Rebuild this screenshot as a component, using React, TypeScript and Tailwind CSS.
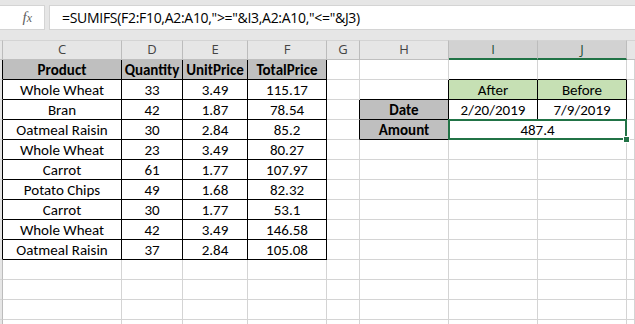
import React from "react";

const COLS = [3, 119, 61, 65, 79, 33, 89, 89, 89, 8];
const LETTERS = ["", "C", "D", "E", "F", "G", "H", "I", "J", ""];

const products: [string, string, string, string][] = [
  ["Whole Wheat", "33", "3.49", "115.17"],
  ["Bran", "42", "1.87", "78.54"],
  ["Oatmeal Raisin", "30", "2.84", "85.2"],
  ["Whole Wheat", "23", "3.49", "80.27"],
  ["Carrot", "61", "1.77", "107.97"],
  ["Potato Chips", "49", "1.68", "82.32"],
  ["Carrot", "30", "1.77", "53.1"],
  ["Whole Wheat", "42", "3.49", "146.58"],
  ["Oatmeal Raisin", "37", "2.84", "105.08"],
];

type Cell = { text?: string; bold?: boolean; bg?: string };

function getCell(r: number, c: number): Cell | null {
  if (r === 1 && c >= 1 && c <= 4) {
    return { text: ["Product", "Quantity", "UnitPrice", "TotalPrice"][c - 1], bold: true, bg: "bg-[#bfbfbf]" };
  }
  if (r >= 2 && r <= 10 && c >= 1 && c <= 4) {
    return { text: products[r - 2][c - 1] };
  }
  if (r === 2 && (c === 7 || c === 8)) {
    return { text: c === 7 ? "After" : "Before", bg: "bg-[#c6e0b4]" };
  }
  if (r === 3 && c === 6) return { text: "Date", bold: true, bg: "bg-[#bfbfbf]" };
  if (r === 3 && c === 7) return { text: "2/20/2019" };
  if (r === 3 && c === 8) return { text: "7/9/2019" };
  if (r === 4 && c === 6) return { text: "Amount", bold: true, bg: "bg-[#bfbfbf]" };
  if (r === 4 && (c === 7 || c === 8)) return { text: "487.4" };
  return null;
}

const inT = (r: number, c: number) => getCell(r, c) !== null;

function App() {
  const rows = Array.from({ length: 14 }, (_, i) => i + 1);
  return (
    <div
      className="w-[635px] h-[324px] overflow-hidden bg-white text-black"
      style={{ fontFamily: "Calibri, Carlito, Lato, 'Liberation Sans', sans-serif" }}
    >
      {/* formula bar */}
      <div className="h-[40px] bg-[#e6e6e6] flex items-start pt-[5px] gap-[4px]">
        <div className="w-[45px] h-[25px] bg-white border border-[#d4d4d4] border-l-0 flex items-center justify-end pr-[12px]">
          <span
            className="italic text-[#5f5f5f] text-[15px] leading-none"
            style={{ fontFamily: "'Liberation Serif', serif" }}
          >
            f<span className="text-[12px]">x</span>
          </span>
        </div>
        <div
          className="flex-1 h-[25px] bg-white border border-[#d4d4d4] border-r-0 flex items-center pl-[12px] text-[14px] tracking-[-0.3px]"
          style={{ fontFamily: "'Segoe UI', 'Open Sans', 'Noto Sans', sans-serif" }}
        >
          =SUMIFS(F2:F10,A2:A10,"&gt;="&amp;I3,A2:A10,"&lt;="&amp;J3)
        </div>
      </div>

      {/* column headers */}
      <div className="flex h-[20px]" style={{ fontFamily: "'Segoe UI', 'Open Sans', 'Noto Sans', sans-serif" }}>
        {COLS.map((w, c) => {
          const sel = c === 7 || c === 8;
          return (
            <div
              key={c}
              style={{ width: w }}
              className={
                "shrink-0 flex items-center justify-center text-[13px] border-t border-[#d4d4d4] " +
                (sel
                  ? "bg-[#d2d2d2] text-[#1e4e35] border-b-2 border-b-[#217346] "
                  : "bg-[#e6e6e6] text-[#444] border-b border-b-[#bfbfbf] ") +
                (c < 9 ? "border-r border-r-[#bcbcbc]" : "")
              }
            >
              {LETTERS[c]}
            </div>
          );
        })}
      </div>

      {/* grid */}
      {rows.map((r) => (
        <div key={r} className={"flex h-[20px] relative " + (r === 4 ? "z-10" : "")}>
          {COLS.map((w, c) => {
            if (r === 4 && c === 8) return null;
            const cell = getCell(r, c);
            let width = w;
            if (r === 4 && c === 7) width = COLS[7] + COLS[8];
            const nextC = r === 4 && c === 7 ? 9 : c + 1;
            const rightBlack = inT(r, c) || inT(r, nextC);
            const bottomBlack = inT(r, c) || inT(r + 1, c);
            const isRowHead = c === 0;
            const sel = r === 4 && c === 7;
            return (
              <div
                key={c}
                style={{ width }}
                className={
                  "shrink-0 relative flex items-center justify-center pt-[2px] text-[15px] leading-none whitespace-nowrap border-r border-b " +
                  (rightBlack ? "border-r-black " : isRowHead ? "border-r-[#bcbcbc] " : "border-r-[#d4d4d4] ") +
                  (bottomBlack ? "border-b-black " : "border-b-[#d4d4d4] ") +
                  (isRowHead ? "bg-[#e6e6e6] " : cell?.bg ?? "") +
                  (cell?.bold ? " font-bold" : "")
                }
              >
                {cell?.text}
                {sel && (
                  <>
                    <div className="absolute -left-[1px] -top-[1px] -right-[1px] -bottom-[1px] border-2 border-[#217346] pointer-events-none z-10" />
                    <div className="absolute -right-[4px] -bottom-[4px] w-[7px] h-[7px] bg-[#217346] border border-white z-20" />
                  </>
                )}
              </div>
            );
          })}
        </div>
      ))}
    </div>
  );
}

export default App;
